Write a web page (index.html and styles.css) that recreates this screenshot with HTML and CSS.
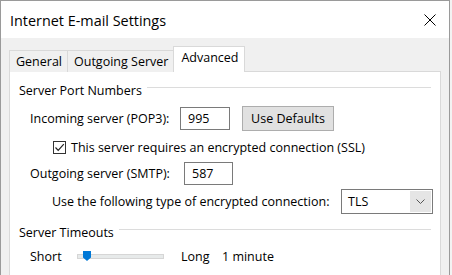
FILE: index.html
```html
<!DOCTYPE html>
<html lang="en">
<head>
    <meta charset="UTF-8">
    <title>Internet E-mail Settings</title>
    <link rel="stylesheet" href="styles.css">
</head>
<body>
    <div class="window">
        <div class="titlebar">
            <span class="title">Internet E-mail Settings</span>
            <svg class="close" width="12" height="12" viewBox="0 0 12 12">
                <path d="M0.5 0.5 L11.5 11.5 M11.5 0.5 L0.5 11.5" stroke="#000" stroke-width="1" fill="none"/>
            </svg>
        </div>
        <div class="body">
            <ul class="tabs">
                <li class="tab">General</li>
                <li class="tab">Outgoing Server</li>
                <li class="tab active">Advanced</li>
            </ul>
            <div class="panel">
                <div class="group-title"><span>Server Port Numbers</span><span class="rule"></span></div>
                <div class="row row-incoming">
                    <label class="label label-in">Incoming server (POP3):</label>
                    <div class="textbox tb-in">995</div>
                    <button class="btn">Use Defaults</button>
                </div>
                <div class="row row-check">
                    <span class="checkbox">
                        <svg width="11" height="11" viewBox="0 0 11 11">
                            <path d="M1.5 5.5 L4.2 8.3 L9.8 2.2" stroke="#222" stroke-width="1.2" fill="none"/>
                        </svg>
                    </span>
                    <span>This server requires an encrypted connection (SSL)</span>
                </div>
                <div class="row row-outgoing">
                    <label class="label label-out">Outgoing server (SMTP):</label>
                    <div class="textbox tb-out">587</div>
                </div>
                <div class="row row-enc">
                    <label class="label label-enc">Use the following type of encrypted connection:</label>
                    <div class="select">
                        <span class="select-value">TLS</span>
                        <span class="select-arrow">
                            <svg width="9" height="5" viewBox="0 0 9 5">
                                <path d="M0.5 0.5 L4.5 4.5 L8.5 0.5" stroke="#555" stroke-width="1" fill="none"/>
                            </svg>
                        </span>
                    </div>
                </div>
                <div class="group-title group-timeouts"><span>Server Timeouts</span><span class="rule"></span></div>
                <div class="row row-slider">
                    <span class="label-short">Short</span>
                    <div class="slider">
                        <div class="track"></div>
                        <svg class="thumb" width="8" height="10" viewBox="0 0 8 10">
                            <path d="M0 0 H8 V6.5 L4 10 L0 6.5 Z" fill="#0078d7"/>
                        </svg>
                    </div>
                    <span class="label-long">Long</span>
                    <span class="label-time">1 minute</span>
                </div>
            </div>
        </div>
    </div>
</body>
</html>
```

FILE: styles.css
```css
body {
    margin: 0;
    padding: 0;
    background-color: #f3f3f3;
    font-family: "Open Sans", "Noto Sans", sans-serif;
    font-size: 12.5px;
    color: #000000;
    overflow: hidden;
}
.window {
    width: 448px;
    height: 274px;
    border: 1px solid #9a9a9a;
    border-bottom: none;
    background-color: #f0f0f0;
    overflow: hidden;
}
.titlebar {
    height: 37px;
    background-color: #ffffff;
    display: flex;
    align-items: center;
    justify-content: space-between;
    padding: 0 13px 0 9px;
}
.title {
    font-size: 14.4px;
    margin-top: 1px;
}
.close {
    display: block;
    margin-top: 1px;
}
.body {
    padding: 9px 0 0 8px;
}
.tabs {
    list-style: none;
    margin: 0;
    padding: 0;
    display: flex;
    align-items: flex-end;
    height: 25px;
    position: relative;
    z-index: 1;
}
.tab {
    height: 21px;
    line-height: 22px;
    padding: 0 5px 0 6px;
    background-color: #f0f0f0;
    border: 1px solid #d9d9d9;
    border-bottom: none;
    margin-right: -1px;
}
.tab.active {
    height: 25px;
    line-height: 21px;
    background-color: #ffffff;
    padding: 0 6px 0 7px;
}
.panel {
    width: 421px;
    height: 220px;
    margin-top: -1px;
    background-color: #ffffff;
    border: 1px solid #d9d9d9;
    padding: 0 0 0 9px;
}
.group-title {
    display: flex;
    align-items: center;
    height: 16px;
    margin-top: 10px;
    margin-right: 9px;
}
.group-title .rule {
    flex: 1;
    height: 1px;
    background-color: #dcdcdc;
    margin-left: 5px;
    margin-top: -5px;
}
.group-timeouts {
    margin-top: 10px;
}
.row {
    display: flex;
    align-items: center;
}
.row-incoming {
    height: 25px;
    margin-top: 8px;
    padding-left: 11px;
}
.label-in {
    width: 150px;
}
.textbox {
    height: 21px;
    line-height: 21px;
    border: 1px solid #7a7a7a;
    background-color: #ffffff;
    padding-left: 7px;
    box-sizing: content-box;
}
.tb-in {
    width: 41px;
}
.btn {
    height: 25px;
    margin-left: 12px;
    padding: 0;
    width: 92px;
    white-space: nowrap;
    background-color: #e1e1e1;
    border: 1px solid #adadad;
    font-family: inherit;
    font-size: 12.5px;
    color: #000000;
}
.row-check {
    height: 16px;
    margin-top: 8px;
    padding-left: 34px;
}
.checkbox {
    width: 11px;
    height: 11px;
    border: 1px solid #333333;
    background-color: #ffffff;
    margin-right: 5px;
    display: flex;
}
.row-outgoing {
    height: 24px;
    margin-top: 6px;
    padding-left: 11px;
}
.label-out {
    width: 154px;
}
.tb-out {
    width: 40px;
}
.row-enc {
    height: 25px;
    margin-top: 4px;
    padding-left: 33px;
}
.label-enc {
    width: 289px;
}
.select {
    width: 90px;
    height: 23px;
    border: 1px solid #7a7a7a;
    display: flex;
    align-items: center;
    justify-content: space-between;
}
.select-value {
    padding-left: 6px;
}
.select-arrow {
    width: 21px;
    height: 21px;
    margin-right: 1px;
    background-color: #e5e5e5;
    display: flex;
    align-items: center;
    justify-content: center;
}
.row-slider {
    height: 20px;
    margin-top: 6px;
    padding-left: 11px;
}
.label-short {
    width: 47px;
}
.slider {
    width: 87px;
    height: 12px;
    position: relative;
    display: flex;
    align-items: center;
}
.track {
    width: 85px;
    height: 3px;
    background-color: #e7eaea;
    border: 1px solid #d6d6d6;
}
.thumb {
    position: absolute;
    left: 6px;
    top: 1px;
}
.label-long {
    margin-left: 17px;
    width: 41px;
}
```
